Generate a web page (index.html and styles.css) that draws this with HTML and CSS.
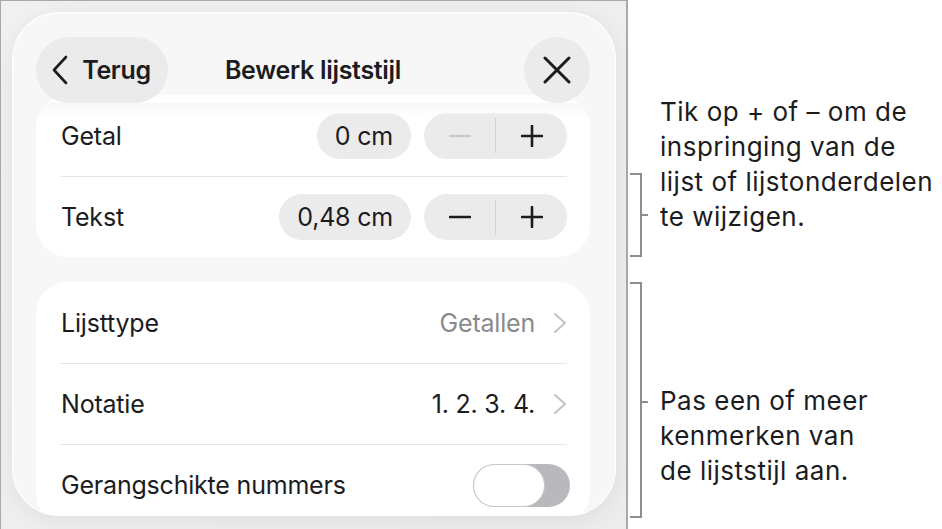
FILE: index.html
```html
<!DOCTYPE html>
<html lang="nl">
<head>
<meta charset="UTF-8">
<title>Bewerk lijststijl</title>
<link rel="stylesheet" href="styles.css">
</head>
<body>
<div class="page">
	<div class="shot">
		<div class="sheet">
			<div class="bar">
				<div class="btn back">
					<svg width="18" height="30" viewBox="0 0 18 30"><path d="M15 2 L3 15 L15 28" fill="none" stroke="#1c1c1e" stroke-width="2.6" stroke-linecap="round" stroke-linejoin="round"/></svg>
					<span>Terug</span>
				</div>
				<div class="title">Bewerk lijststijl</div>
				<div class="btn close">
					<svg width="28" height="28" viewBox="0 0 28 28"><path d="M2 2 L26 26 M26 2 L2 26" fill="none" stroke="#1c1c1e" stroke-width="3" stroke-linecap="round"/></svg>
				</div>
			</div>

			<div class="group first">
				<div class="row">
					<span class="label">Getal</span>
					<div class="ctrls">
						<span class="val">0 cm</span>
						<div class="stepper">
							<span class="step off"><svg width="22" height="22" viewBox="0 0 22 22"><path d="M1 11 H21" stroke="currentColor" stroke-width="2.6" stroke-linecap="round"/></svg></span>
							<i></i>
							<span class="step"><svg width="22" height="22" viewBox="0 0 22 22"><path d="M1 11 H21 M11 1 V21" stroke="currentColor" stroke-width="2.6" stroke-linecap="round"/></svg></span>
						</div>
					</div>
				</div>
				<div class="row">
					<span class="label">Tekst</span>
					<div class="ctrls">
						<span class="val">0,48 cm</span>
						<div class="stepper">
							<span class="step"><svg width="22" height="22" viewBox="0 0 22 22"><path d="M1 11 H21" stroke="currentColor" stroke-width="2.6" stroke-linecap="round"/></svg></span>
							<i></i>
							<span class="step"><svg width="22" height="22" viewBox="0 0 22 22"><path d="M1 11 H21 M11 1 V21" stroke="currentColor" stroke-width="2.6" stroke-linecap="round"/></svg></span>
						</div>
					</div>
				</div>
			</div>

			<div class="group">
				<div class="row">
					<span class="label">Lijsttype</span>
					<div class="ctrls">
						<span class="muted">Getallen</span>
						<svg class="chev" width="14" height="22" viewBox="0 0 14 22"><path d="M2 2 L12 11 L2 20" fill="none" stroke="#c4c4c7" stroke-width="2" stroke-linecap="round" stroke-linejoin="round"/></svg>
					</div>
				</div>
				<div class="row">
					<span class="label">Notatie</span>
					<div class="ctrls">
						<span>1. 2. 3. 4.</span>
						<svg class="chev" width="14" height="22" viewBox="0 0 14 22"><path d="M2 2 L12 11 L2 20" fill="none" stroke="#c4c4c7" stroke-width="2" stroke-linecap="round" stroke-linejoin="round"/></svg>
					</div>
				</div>
				<div class="row">
					<span class="label">Gerangschikte nummers</span>
					<div class="toggle"><b></b></div>
				</div>
			</div>
		</div>
	</div>

	<div class="notes">
		<div class="brace brace1"></div>
		<p class="note note1">Tik op + of – om de<br>inspringing van de<br>lijst of lijstonderdelen<br>te wijzigen.</p>
		<div class="brace brace2"></div>
		<p class="note note2">Pas een of meer<br>kenmerken van<br>de lijststijl aan.</p>
	</div>
</div>
</body>
</html>
```

FILE: styles.css
```css
*{ margin:0; padding:0; box-sizing:border-box; }
body{
	width:942px;
	height:529px;
	overflow:hidden;
	background:#fff;
	font-family:Inter, "Liberation Sans", sans-serif;
	color:#1c1c1e;
}
.page{
	display:flex;
	height:529px;
}
.shot{
	width:628px;
	height:529px;
	border:1px solid #a9a9a9;
	border-right-width:2px;
	border-bottom:none;
	background:linear-gradient(135deg, #f1f1f1, #ececec);
	padding:12px 0 0 12px;
}
.sheet{
	width:602px;
	height:502px;
	border-radius:46px;
	background:#f7f7f7;
	box-shadow:0 0 0 1px #fff, 0 4px 24px rgba(0,0,0,.07);
	overflow:hidden;
	padding:24px 25px 0 23px;
}

/* header */
.bar{
	position:relative;
	z-index:1;
	height:66px;
	display:grid;
	grid-template-columns:1fr auto 1fr;
	align-items:center;
}
.bar:after{
	content:"";
	position:absolute;
	left:0; right:0; top:100%;
	height:14px;
	background:linear-gradient(#f7f7f7, rgba(247,247,247,0));
}
.btn{
	height:66px;
	border-radius:33px;
	background:#ebebeb;
	display:flex;
	align-items:center;
	justify-content:center;
}
.back{
	width:132px;
	gap:13px;
	padding-right:2px;
	font-size:25px;
	font-weight:600;
	letter-spacing:-0.3px;
}
.close{
	width:66px;
	justify-self:end;
}
.title{
	font-size:25px;
	font-weight:600;
	letter-spacing:-0.3px;
}

/* groups */
.group{
	background:#fff;
	border-radius:32px;
	margin-bottom:25px;
}
.group.first{
	margin-top:-8px;
}
.row{
	height:81px;
	margin:0 23px 0 25px;
	display:flex;
	align-items:center;
	justify-content:space-between;
	font-size:25px;
	letter-spacing:-0.2px;
}
.row + .row{
	border-top:1px solid #e4e4e4;
}
.ctrls{
	display:flex;
	align-items:center;
	gap:13px;
}
.val{
	height:46px;
	line-height:46px;
	border-radius:23px;
	background:#ebebeb;
	padding:0 18px;
}
.stepper{
	width:143px;
	height:46px;
	border-radius:23px;
	background:#ebebeb;
	display:flex;
	align-items:center;
}
.stepper i{
	width:1px;
	height:35px;
	background:#d2d2d2;
}
.step{
	flex:1;
	display:flex;
	align-items:center;
	justify-content:center;
	color:#1c1c1e;
}
.step.off{
	color:#c9c9c9;
}
.muted{
	color:#8a8a8e;
}
.chev{
	margin-left:5px;
}
.toggle{
	width:97px;
	height:43px;
	margin-right:-3px;
	border-radius:22px;
	background:#b9b9bd;
	display:flex;
}
.toggle b{
	width:72px;
	height:43px;
	border-radius:22px;
	background:#fff;
	border:1.5px solid #c8c8c8;
}

/* annotations */
.notes{
	position:relative;
	flex:1;
}
.brace{
	position:absolute;
	left:2px;
	width:12px;
	border:2px solid #8e8e8e;
	border-left:none;
}
.brace:after{
	content:"";
	position:absolute;
	left:100%;
	width:8px;
	height:2px;
	background:#8e8e8e;
}
.brace1{
	top:173px;
	height:84px;
}
.brace1:after{ top:39px; }
.brace2{
	top:282px;
	height:236px;
}
.brace2:after{ top:117px; }
.note{
	position:absolute;
	left:32px;
	font-size:26px;
	line-height:35px;
	color:#1c1c1e;
	letter-spacing:0.5px;
}
.note1{ top:94px; }
.note2{ top:383px; }
```
